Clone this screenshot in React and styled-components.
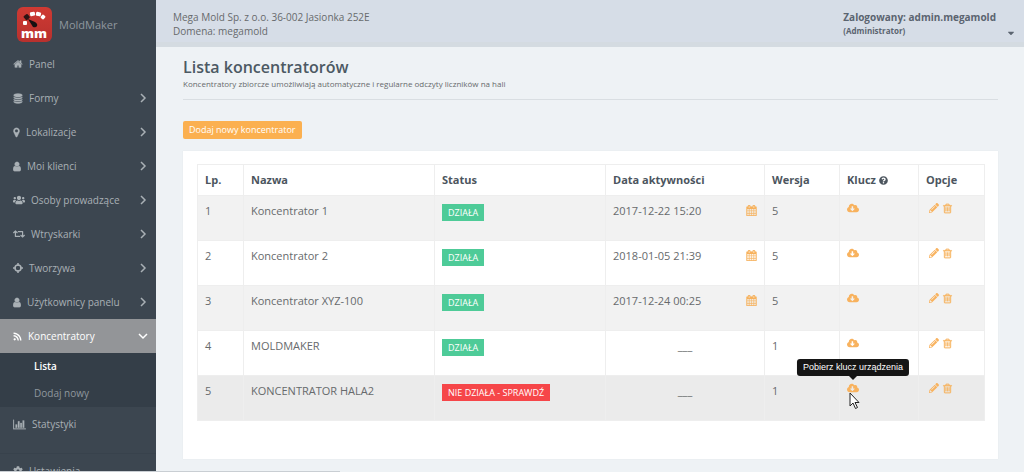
import React from 'react'
import styled, { createGlobalStyle, css } from 'styled-components'
import {
  FaUsers, FaRetweet, FaRss, FaCog,
  FaCloudDownloadAlt, FaPencilAlt, FaQuestionCircle, FaCaretDown,
} from 'react-icons/fa'

const GlobalStyle = createGlobalStyle`
  * {
    box-sizing: border-box;
  }

  body {
    margin: 0;
    background: #eef2f5;
    color: #676a6c;
    font-family: "Open Sans", sans-serif;
    font-size: 11px;
    line-height: 14px;
    overflow: hidden;
  }
`

const glyphs = {
  home: 'M1472 992v480q0 26-19 45t-45 19h-384v-384h-256v384h-384q-26 0-45-19t-19-45v-480q0-1 .5-3t.5-3l575-474 575 474q1 2 1 6zm223-69l-62 74q-8 9-21 11h-3q-13 0-21-7l-692-577-692 577q-12 8-24 7-13-2-21-11l-62-74q-8-10-7-23.5t11-21.5l719-599q32-26 76-26t76 26l244 204v-195q0-14 9-23t23-9h192q14 0 23 9t9 23v408l219 182q10 8 11 21.5t-7 23.5z',
  database: 'M896 768q237 0 443-43t325-127v170q0 69-103 128t-280 93.5-385 34.5-385-34.5-280-93.5-103-128v-170q119 84 325 127t443 43zm0 768q237 0 443-43t325-127v170q0 69-103 128t-280 93.5-385 34.5-385-34.5-280-93.5-103-128v-170q119 84 325 127t443 43zm0-384q237 0 443-43t325-127v170q0 69-103 128t-280 93.5-385 34.5-385-34.5-280-93.5-103-128v-170q119 84 325 127t443 43zm0-1152q208 0 385 34.5t280 93.5 103 128v128q0 69-103 128t-280 93.5-385 34.5-385-34.5-280-93.5-103-128v-128q0-69 103-128t280-93.5 385-34.5z',
  marker: 'M1152 640q0-106-75-181t-181-75-181 75-75 181 75 181 181 75 181-75 75-181zm256 0q0 109-33 179l-364 774q-16 33-47.5 52t-67.5 19-67.5-19-46.5-52l-365-774q-33-70-33-179 0-212 150-362t362-150 362 150 150 362z',
  user: 'M1536 1399q0 109-62.5 187t-150.5 78h-854q-88 0-150.5-78t-62.5-187q0-85 8.5-160.5t31.5-152 58.5-131 94-89 134.5-34.5q131 128 313 128t313-128q76 0 134.5 34.5t94 89 58.5 131 31.5 152 8.5 160.5zm-256-887q0 159-112.5 271.5t-271.5 112.5-271.5-112.5-112.5-271.5 112.5-271.5 271.5-112.5 271.5 112.5 112.5 271.5z',
  chart: 'M640 896v512h-256v-512h256zm384-512v1024h-256v-1024h256zm1024 1152v128h-2048v-1536h128v1408h1920zm-640-896v768h-256v-768h256zm384-384v1152h-256v-1152h256z',
  calendar: 'M192 1664h288v-288h-288v288zm352 0h320v-288h-320v288zm-352-352h288v-320h-288v320zm352 0h320v-320h-320v320zm-352-384h288v-288h-288v288zm736 736h320v-288h-320v288zm-384-736h320v-288h-320v288zm768 736h288v-288h-288v288zm-384-352h320v-320h-320v320zm-352-864v-288q0-13-9.5-22.5t-22.5-9.5h-64q-13 0-22.5 9.5t-9.5 22.5v288q0 13 9.5 22.5t22.5 9.5h64q13 0 22.5-9.5t9.5-22.5zm736 864h288v-320h-288v320zm-384-384h320v-288h-320v288zm384 0h288v-288h-288v288zm32-480v-288q0-13-9.5-22.5t-22.5-9.5h-64q-13 0-22.5 9.5t-9.5 22.5v288q0 13 9.5 22.5t22.5 9.5h64q13 0 22.5-9.5t9.5-22.5zm384-64v1280q0 52-38 90t-90 38h-1408q-52 0-90-38t-38-90v-1280q0-52 38-90t90-38h128v-96q0-66 47-113t113-47h64q66 0 113 47t47 113v96h384v-96q0-66 47-113t113-47h64q66 0 113 47t47 113v96h128q52 0 90 38t38 90z',
  trash: 'M704 736v576q0 14-9 23t-23 9h-64q-14 0-23-9t-9-23v-576q0-14 9-23t23-9h64q14 0 23 9t9 23zm256 0v576q0 14-9 23t-23 9h-64q-14 0-23-9t-9-23v-576q0-14 9-23t23-9h64q14 0 23 9t9 23zm256 0v576q0 14-9 23t-23 9h-64q-14 0-23-9t-9-23v-576q0-14 9-23t23-9h64q14 0 23 9t9 23zm128 724v-948h-896v948q0 22 7 40.5t14.5 27 10.5 8.5h832q3 0 10.5-8.5t14.5-27 7-40.5zm-672-1076h448l-48-117q-7-9-17-11h-317q-10 2-17 11zm928 32v64q0 14-9 23t-23 9h-96v948q0 83-47 143.5t-113 60.5h-832q-66 0-113-58.5t-47-141.5v-952h-96q-14 0-23-9t-9-23v-64q0-14 9-23t23-9h309l70-167q15-37 54-63t79-26h320q40 0 79 26t54 63l70 167h309q14 0 23 9t9 23z',
}

const Glyph = ({ name, size = 11, box = '0 0 1792 1792', width }) => (
  <svg width={width || size} height={size} viewBox={box} fill="currentColor" stroke="currentColor" strokeWidth="40" aria-hidden="true">
    <path d={glyphs[name]} />
  </svg>
)

const Crosshairs = () => (
  <svg width="10" height="10" viewBox="0 0 10 10" fill="none" stroke="currentColor" aria-hidden="true">
    <circle cx="5" cy="5" r="3" strokeWidth="1.5" />
    <path d="M5 0v3M5 7v3M0 5h3M7 5h3" strokeWidth="1.5" />
  </svg>
)

const Layout = styled.div`
  display: grid;
  grid-template-columns: 156px minmax(0, 1fr);
  height: 100vh;
  overflow: hidden;
`

const Sidebar = styled.aside`
  background: #3c4650;
  color: #a9b0b5;
  font-size: 10px;
  overflow: hidden;
`

const Brand = styled.a`
  display: flex;
  align-items: center;
  gap: 6px;
  height: 47px;
  padding: 2px 0 0 16px;
  color: #8f979e;
  font-size: 11px;
  text-decoration: none;
`

const NavList = styled.ul`
  list-style: none;
  margin: 0;
  padding: 0;
`

const NavLink = styled.a`
  display: flex;
  align-items: center;
  gap: 6px;
  height: 34px;
  padding: 0 8px 0 13px;
  color: ${props => props.$active ? '#fff' : 'inherit'};
  background: ${props => props.$active ? '#939598' : 'transparent'};
  text-decoration: none;
  white-space: nowrap;
`

const Chevron = styled.svg`
  margin-left: auto;
  transform: ${props => props.$open ? 'rotate(90deg)' : 'none'};
`

const SubMenu = styled.ul`
  list-style: none;
  margin: 0;
  padding: 0;
  background: #343e48;
`

const SubLink = styled.a`
  display: block;
  padding-left: 34px;
  line-height: 27px;
  color: ${props => props.$active ? '#fff' : '#8f979e'};
  font-weight: ${props => props.$active ? 600 : 400};
  text-decoration: none;
`

const NavFooter = styled.div`
  margin-top: 12px;
  border-top: 1px solid #38424c;
`

const Main = styled.div`
  display: flex;
  flex-direction: column;
  min-width: 0;
`

const TopBar = styled.header`
  display: flex;
  justify-content: space-between;
  height: 47px;
  padding: 10px 8px 0 17px;
  background: #d6dde7;
  border-bottom: 5px solid #d4dbe1;
  font-size: 10px;
`

const UserMenu = styled.button`
  display: flex;
  align-items: flex-end;
  gap: 10px;
  height: 28px;
  padding: 0;
  border: 0;
  background: none;
  color: #5b6470;
  font: inherit;
  font-weight: 700;
  text-align: left;
`

const Role = styled.span`
  display: block;
  font-size: 8px;
`

const Content = styled.main`
  padding: 9px 26px 0 27px;
`

const PageHead = styled.div`
  padding-bottom: 9px;
  border-bottom: 1px solid #d9dee2;
`

const Title = styled.h1`
  margin: 0;
  color: #4c5963;
  font-size: 16px;
  font-weight: 600;
  line-height: 22px;
`

const Lead = styled.p`
  margin: 0;
  font-size: 8px;
  line-height: 12px;
`

const AddButton = styled.button`
  display: block;
  height: 18px;
  margin: 21px 0 12px;
  padding: 0 6px;
  border: 0;
  border-radius: 2px;
  background: #fbb050;
  color: #fff;
  font: inherit;
  font-size: 9px;
`

const Panel = styled.section`
  padding: 13px 13px 38px 14px;
  background: #fff;
  box-shadow: 0 0 1px #dde2e8;
`

const Table = styled.table`
  width: 100%;
  table-layout: fixed;
  border-collapse: collapse;
`

const cell = css`
  padding: 8px 7px;
  border: 1px solid #eeeeee;
  text-align: left;
  vertical-align: top;
`

const Th = styled.th`
  ${cell}
  width: ${props => props.$width};
  height: 30px;
  color: #4c555e;
  white-space: nowrap;

  svg {
    margin-left: 3px;
    vertical-align: -1px;
  }
`

const Row = styled.tr`
  background: ${props => props.$hovered ? '#ebebeb' : 'transparent'};

  &:nth-child(odd) {
    background: ${props => props.$hovered ? '#ebebeb' : '#f2f2f2'};
  }
`

const Td = styled.td`
  ${cell}
  height: 45px;
  padding-top: ${props => props.$icons ? '6px' : '8px'};
`

const Status = styled.span`
  display: inline-block;
  padding: 0 6px;
  background: ${props => props.$ok ? '#4ecb98' : '#f64649'};
  color: #fff;
  font-size: 9px;
  line-height: 17px;
  white-space: nowrap;
`

const DateCell = styled.div`
  display: flex;
  justify-content: ${props => props.$empty ? 'center' : 'space-between'};
`

const Actions = styled.div`
  display: flex;
  gap: 3px;
  padding-left: 3px;
`

const IconButton = styled.button`
  position: relative;
  display: flex;
  align-items: center;
  height: 12px;
  padding: 0;
  border: 0;
  background: none;
  color: #f8b25e;
`

const Tooltip = styled.span`
  position: absolute;
  bottom: 18px;
  left: 50%;
  transform: translateX(-50%);
  padding: 0 6px;
  border-radius: 3px;
  background: #151515;
  color: #fff;
  font-size: 9px;
  line-height: 17px;
  white-space: nowrap;

  &::after {
    content: '';
    position: absolute;
    top: 100%;
    left: 50%;
    margin-left: -4px;
    border: 4px solid transparent;
    border-top-color: #151515;
    border-bottom: 0;
  }
`

const Pointer = styled.svg`
  position: absolute;
  top: 10px;
  left: 2px;
`

const LoadStrip = styled.div`
  position: fixed;
  bottom: 0;
  left: 0;
  width: 340px;
  height: 1px;
  background: #c9ced3;
`

const Logo = () => (
  <svg width="37" height="37" viewBox="0 0 37 37" role="img" aria-label="mm">
    <defs>
      <linearGradient id="logo" x1="0" y1="0" x2="0" y2="1">
        <stop offset="0" stopColor="#cf3a33" />
        <stop offset="1" stopColor="#b8312e" />
      </linearGradient>
    </defs>
    <rect x="1" y="1" width="35" height="35" rx="6" fill="url(#logo)" />
    <g fill="#fff">
      <rect x="7" y="15" width="4" height="4" rx="1" />
      <rect x="14" y="6" width="5" height="4" rx="1" transform="rotate(-10 16 8)" />
      <rect x="20" y="6" width="5" height="4" rx="1" transform="rotate(12 22 8)" />
      <rect x="25" y="9" width="4" height="4" rx="1" transform="rotate(40 27 11)" />
    </g>
    <rect x="8" y="9" width="5" height="5" rx="1" fill="#2a1414" transform="rotate(-40 10 11)" />
    <path d="M12 13l7 3q3 2 2 4t-4 1z" fill="#161011" />
    <text x="18" y="32" fill="#fff" fontSize="13" fontWeight="800" textAnchor="middle">mm</text>
  </svg>
)

const menu = [
  { label: 'Panel', icon: <Glyph name="home" width={10} size={12} />, leaf: true },
  { label: 'Formy', icon: <Glyph name="database" width={10} size={11} /> },
  { label: 'Lokalizacje', icon: <Glyph name="marker" width={7} size={11} box="384 0 1024 1792" /> },
  { label: 'Moi klienci', icon: <Glyph name="user" width={8} size={11} box="256 0 1280 1792" /> },
  { label: 'Osoby prowadzące', icon: <FaUsers size={12} /> },
  { label: 'Wtryskarki', icon: <FaRetweet size={12} /> },
  { label: 'Tworzywa', icon: <Crosshairs /> },
  { label: 'Użytkownicy panelu', icon: <Glyph name="user" width={8} size={11} box="256 0 1280 1792" /> },
  { label: 'Koncentratory', icon: <FaRss size={9} />, active: true },
]

const hubs = [
  { id: 1, name: 'Koncentrator 1', ok: true, date: '2017-12-22 15:20', version: 5 },
  { id: 2, name: 'Koncentrator 2', ok: true, date: '2018-01-05 21:39', version: 5 },
  { id: 3, name: 'Koncentrator XYZ-100', ok: true, date: '2017-12-24 00:25', version: 5 },
  { id: 4, name: 'MOLDMAKER', ok: true, version: 1 },
  { id: 5, name: 'KONCENTRATOR HALA2', ok: false, version: 1, hovered: true },
]

const NavItem = ({ label, icon, leaf, active }) => (
  <li>
    <NavLink href="#" $active={active}>
      {icon}
      <span>{label}</span>
      {!leaf && (
        <Chevron $open={active} width="10" height="10" viewBox="0 0 10 10" fill="none" stroke="currentColor" strokeWidth="1.5">
          <path d="M3 1l4 4-4 4" />
        </Chevron>
      )}
    </NavLink>
  </li>
)

const HubRow = ({ hub }) => (
  <Row $hovered={hub.hovered}>
    <Td>{hub.id}</Td>
    <Td>{hub.name}</Td>
    <Td><Status $ok={hub.ok}>{hub.ok ? 'DZIAŁA' : 'NIE DZIAŁA - SPRAWDŹ'}</Status></Td>
    <Td>
      <DateCell $empty={!hub.date}>
        {hub.date || '___'}
        {hub.date && <IconButton aria-label="Kalendarz"><Glyph name="calendar" size={11} /></IconButton>}
      </DateCell>
    </Td>
    <Td>{hub.version}</Td>
    <Td $icons>
      <IconButton aria-label="Pobierz klucz">
        <FaCloudDownloadAlt size={12} />
        {hub.hovered && (
          <>
            <Tooltip role="tooltip">Pobierz klucz urządzenia</Tooltip>
            <Pointer width="11" height="18" viewBox="0 0 11 18" fill="#fff" stroke="#222" strokeWidth="1">
              <path d="M1 1v13l3-3 2.500 5.500 2-1-2.500-5h4z" />
            </Pointer>
          </>
        )}
      </IconButton>
    </Td>
    <Td $icons>
      <Actions>
        <IconButton aria-label="Edytuj"><FaPencilAlt size={10} /></IconButton>
        <IconButton aria-label="Usuń"><Glyph name="trash" size={11} /></IconButton>
      </Actions>
    </Td>
  </Row>
)

const App = () => {
  return (
    <>
      <GlobalStyle />
      <Layout>
        <Sidebar>
          <Brand href="#"><Logo />MoldMaker</Brand>
          <nav>
            <NavList>
              {menu.map(item => <NavItem key={item.label} {...item} />)}
            </NavList>
            <SubMenu>
              <li><SubLink href="#" $active>Lista</SubLink></li>
              <li><SubLink href="#">Dodaj nowy</SubLink></li>
            </SubMenu>
            <NavList>
              <NavItem label="Statystyki" icon={<Glyph name="chart" width={13} size={11} box="0 0 2048 1792" />} leaf />
            </NavList>
            <NavFooter>
              <NavList>
                <NavItem label="Ustawienia" icon={<FaCog size={10} />} leaf />
              </NavList>
            </NavFooter>
          </nav>
        </Sidebar>
        <Main>
          <TopBar>
            <div>
              <div>Mega Mold Sp. z o.o. 36-002 Jasionka 252E</div>
              <div>Domena: megamold</div>
            </div>
            <UserMenu>
              <span>
                Zalogowany: admin.megamold
                <Role>(Administrator)</Role>
              </span>
              <FaCaretDown size={10} />
            </UserMenu>
          </TopBar>
          <Content>
            <PageHead>
              <Title>Lista koncentratorów</Title>
              <Lead>Koncentratory zbiorcze umożliwiają automatyczne i regularne odczyty liczników na hali</Lead>
            </PageHead>
            <AddButton>Dodaj nowy koncentrator</AddButton>
            <Panel>
              <Table>
                <thead>
                  <tr>
                    <Th $width="46px">Lp.</Th>
                    <Th>Nazwa</Th>
                    <Th $width="171px">Status</Th>
                    <Th $width="159px">Data aktywności</Th>
                    <Th $width="75px">Wersja</Th>
                    <Th $width="79px">Klucz<FaQuestionCircle size={9} /></Th>
                    <Th $width="66px">Opcje</Th>
                  </tr>
                </thead>
                <tbody>
                  {hubs.map(hub => <HubRow key={hub.id} hub={hub} />)}
                </tbody>
              </Table>
            </Panel>
          </Content>
        </Main>
      </Layout>
      <LoadStrip />
    </>
  )
}

export default App
